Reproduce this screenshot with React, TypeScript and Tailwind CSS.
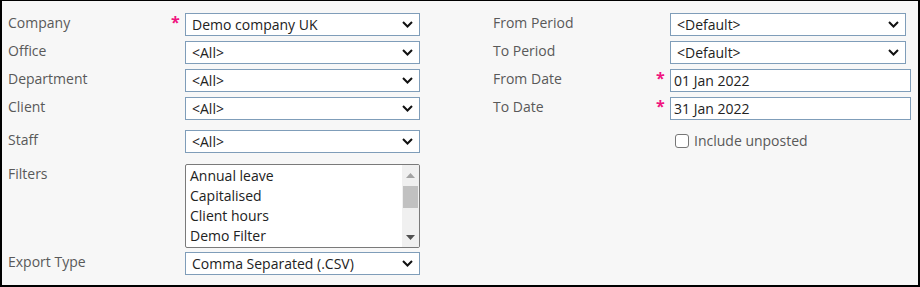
import React from "react";

const FONT = "font-['Open_Sans',_'Liberation_Sans',_sans-serif]";

const Chevron = () => (
  <svg width="11" height="7" viewBox="0 0 11 7" className="shrink-0">
    <path d="M1 1 L5.5 5.5 L10 1" fill="none" stroke="#111" strokeWidth="2" />
  </svg>
);

const Required = ({ on }: { on?: boolean }) => (
  <div className="w-[15px] shrink-0 pl-[1px] text-[16px] leading-[18px] font-bold text-[#f0147f]">
    {on ? "*" : ""}
  </div>
);

const Label = ({ text }: { text: string }) => (
  <div className="w-[162px] shrink-0 text-[14px] leading-[19px] text-[#595959]">{text}</div>
);

const Select = ({ value, w = "w-[235px]" }: { value: string; w?: string }) => (
  <div
    className={`${w} h-[23px] flex items-center justify-between border border-[#7f9db9] bg-white pl-[6px] pr-[6px] text-[14px] text-[#222]`}
  >
    <span className="leading-none">{value}</span>
    <Chevron />
  </div>
);

const DateInput = ({ value }: { value: string }) => (
  <div className="w-[241px] h-[23px] flex items-center border border-[#7f9db9] bg-white pl-[3px] text-[14px] text-[#222]">
    <span className="leading-none">{value}</span>
  </div>
);

const Row = ({
  label,
  required,
  children,
}: {
  label: string;
  required?: boolean;
  children: React.ReactNode;
}) => (
  <div className="flex items-start">
    <Label text={label} />
    <Required on={required} />
    {children}
  </div>
);

function ListBox() {
  const items = ["Annual leave", "Capitalised", "Client hours", "Demo Filter"];
  return (
    <div className="w-[236px] h-[84px] flex border border-[#7a7a7a] rounded-[2px] bg-white overflow-hidden">
      <div className="flex-1 pl-[4px] pt-[1px]">
        {items.map((it) => (
          <div key={it} className="h-[20px] leading-[20px] text-[14px] text-[#222]">
            {it}
          </div>
        ))}
      </div>
      <div className="w-[17px] h-full bg-[#f0f0f0] flex flex-col items-center">
        <div className="h-[20px] flex items-center justify-center">
          <svg width="9" height="5" viewBox="0 0 9 5">
            <path d="M0 5 L4.5 0 L9 5 Z" fill="#a3a3a3" />
          </svg>
        </div>
        <div className="w-[15px] h-[22px] mt-[1px] bg-[#c1c1c1]" />
        <div className="flex-1" />
        <div className="h-[20px] flex items-center justify-center">
          <svg width="9" height="5" viewBox="0 0 9 5">
            <path d="M0 0 L4.5 5 L9 0 Z" fill="#505050" />
          </svg>
        </div>
      </div>
    </div>
  );
}

export default function App() {
  return (
    <div
      className={`${FONT} w-[920px] h-[287px] bg-[#f7f7f7] border-t border-l-2 border-r-2 border-b-2 border-black flex pt-[12px] pl-[6px]`}
    >
      {/* left column */}
      <div className="flex flex-col w-[412px]">
        <div className="flex flex-col gap-[5px]">
          <Row label="Company" required>
            <Select value="Demo company UK" />
          </Row>
          <Row label="Office">
            <Select value="<All>" />
          </Row>
          <Row label="Department">
            <Select value="<All>" />
          </Row>
          <Row label="Client">
            <Select value="<All>" />
          </Row>
        </div>
        <div className="mt-[10px]">
          <Row label="Staff">
            <Select value="<All>" />
          </Row>
        </div>
        <div className="mt-[11px]">
          <Row label="Filters">
            <ListBox />
          </Row>
        </div>
        <div className="mt-[4px]">
          <Row label="Export Type">
            <Select value="Comma Separated (.CSV)" />
          </Row>
        </div>
      </div>

      {/* right column */}
      <div className="flex flex-col ml-[73px]">
        <div className="flex flex-col gap-[5px]">
          <Row label="From Period">
            <Select value="<Default>" w="w-[236px]" />
          </Row>
          <Row label="To Period">
            <Select value="<Default>" w="w-[236px]" />
          </Row>
          <Row label="From Date" required>
            <DateInput value="01 Jan 2022" />
          </Row>
          <Row label="To Date" required>
            <DateInput value="31 Jan 2022" />
          </Row>
        </div>
        <div className="flex items-center mt-[11px] ml-[182px]">
          <div className="w-[14px] h-[14px] border border-[#767676] rounded-[3px] bg-white" />
          <span className="ml-[5px] text-[14px] leading-[20px] text-[#595959]">Include unposted</span>
        </div>
      </div>
    </div>
  );
}
